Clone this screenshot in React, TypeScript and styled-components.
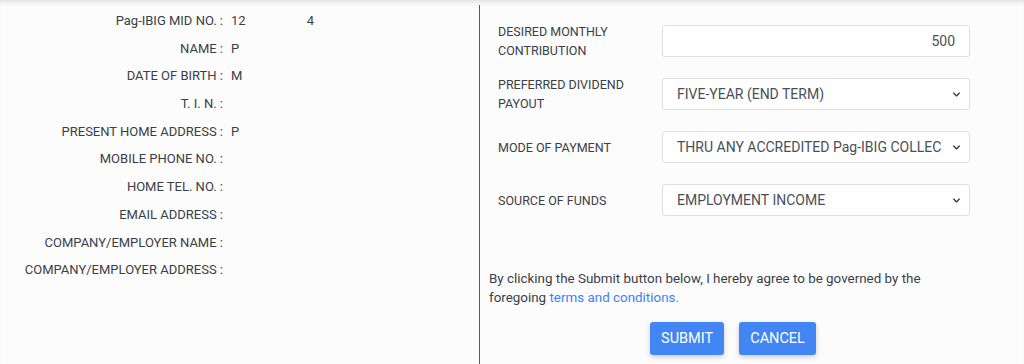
import React from "react";
import styled, { createGlobalStyle } from "styled-components";

const GlobalStyle = createGlobalStyle`
  html, body {
    margin: 0;
    padding: 0;
    background: #fcfcfc;
  }
  body {
    font-family: "Roboto", "Liberation Sans", sans-serif;
    color: #3a3f47;
  }
`;

const details = [
  { label: "Pag-IBIG MID NO. :", value: "12", extra: "4" },
  { label: "NAME :", value: "P" },
  { label: "DATE OF BIRTH :", value: "M" },
  { label: "T. I. N. :", value: "" },
  { label: "PRESENT HOME ADDRESS :", value: "P" },
  { label: "MOBILE PHONE NO. :", value: "" },
  { label: "HOME TEL. NO. :", value: "" },
  { label: "EMAIL ADDRESS :", value: "" },
  { label: "COMPANY/EMPLOYER NAME :", value: "" },
  { label: "COMPANY/EMPLOYER ADDRESS :", value: "" },
];

function App() {
  return (
    <>
      <GlobalStyle />
      <Page>
        <DetailsColumn>
          {details.map((d) => (
            <DetailRow key={d.label}>
              <DetailLabel>{d.label}</DetailLabel>
              <DetailValue>
                {d.value}
                {d.extra && <ValueTail>{d.extra}</ValueTail>}
              </DetailValue>
            </DetailRow>
          ))}
        </DetailsColumn>
        <FormColumn>
          <FormRow>
            <FormLabel>
              DESIRED MONTHLY
              <br />
              CONTRIBUTION
            </FormLabel>
            <TextInput defaultValue="500" />
          </FormRow>
          <FormRow>
            <FormLabel>
              PREFERRED DIVIDEND
              <br />
              PAYOUT
            </FormLabel>
            <Select defaultValue="five">
              <option value="five">FIVE-YEAR (END TERM)</option>
            </Select>
          </FormRow>
          <FormRow>
            <FormLabel>MODE OF PAYMENT</FormLabel>
            <Select defaultValue="thru">
              <option value="thru">THRU ANY ACCREDITED Pag-IBIG COLLECTING PARTNER</option>
            </Select>
          </FormRow>
          <FormRow>
            <FormLabel>SOURCE OF FUNDS</FormLabel>
            <Select defaultValue="emp">
              <option value="emp">EMPLOYMENT INCOME</option>
            </Select>
          </FormRow>
          <Agreement>
            By clicking the Submit button below, I hereby agree to be governed by the
            <br />
            foregoing <TermsLink href="#">terms and conditions.</TermsLink>
          </Agreement>
          <Actions>
            <ActionButton>SUBMIT</ActionButton>
            <ActionButton>CANCEL</ActionButton>
          </Actions>
        </FormColumn>
      </Page>
    </>
  );
}

const Page = styled.div`
  display: grid;
  grid-template-columns: 479px 1fr;
  height: 364px;
  box-sizing: border-box;
  box-shadow: inset 0 5px 5px -3px rgba(0, 0, 0, 0.12);
`;

const DetailsColumn = styled.div`
  padding-top: 12px;
  display: flex;
  flex-direction: column;
`;

const DetailRow = styled.div`
  display: grid;
  grid-template-columns: 223px 1fr;
  column-gap: 8px;
  height: 27.7px;
  font-size: 13px;
  line-height: 18px;
`;

const DetailLabel = styled.div`
  text-align: right;
  white-space: nowrap;
`;

const DetailValue = styled.div`
  display: flex;
`;

const ValueTail = styled.span`
  margin-left: 61px;
`;

const FormColumn = styled.div`
  margin-top: 5px;
  border-left: 1px solid #5a5a5a;
  padding: 17px 0 0 9px;
  display: flex;
  flex-direction: column;
`;

const FormRow = styled.div`
  display: grid;
  grid-template-columns: 164px 308px;
  align-items: center;
  padding-left: 9px;
  min-height: 38px;

  & + & {
    margin-top: 15px;
  }
`;

const FormLabel = styled.div`
  font-size: 12.5px;
  line-height: 19px;
  text-transform: uppercase;
`;

const controlStyles = `
  box-sizing: border-box;
  height: 32px;
  width: 308px;
  border: 1px solid #dcdfe3;
  border-radius: 3px;
  background: #fff;
  font-family: "Roboto", "Liberation Sans", sans-serif;
  font-size: 14px;
  color: #495057;
  padding: 0 14px;
  outline: none;
`;

const TextInput = styled.input`
  ${controlStyles}
  text-align: right;
`;

const Select = styled.select`
  ${controlStyles}
  appearance: none;
  background-image: url("data:image/svg+xml;charset=utf-8,%3Csvg xmlns='http://www.w3.org/2000/svg' viewBox='0 0 16 16'%3E%3Cpath fill='none' stroke='%23343a40' stroke-linecap='round' stroke-linejoin='round' stroke-width='2.4' d='M3 5.5l5 5 5-5'/%3E%3C/svg%3E");
  background-repeat: no-repeat;
  background-position: right 8px center;
  background-size: 9px 9px;
  padding-right: 28px;
  text-overflow: clip;
`;

const Agreement = styled.p`
  margin: 51px 0 0;
  font-size: 13.4px;
  line-height: 18.5px;
  color: #3a3f47;
`;

const TermsLink = styled.a`
  color: #3b82f6;
  text-decoration: none;
`;

const Actions = styled.div`
  display: flex;
  justify-content: center;
  gap: 15px;
  margin-top: 15px;
  padding-right: 47px;
`;

const ActionButton = styled.button`
  height: 33px;
  padding: 0 11px;
  border: none;
  border-radius: 3px;
  background: #4285f4;
  color: #fff;
  font-family: "Roboto", "Liberation Sans", sans-serif;
  font-size: 14.5px;
  box-shadow: 0 2px 5px rgba(0, 0, 0, 0.2);
`;

export default App;
